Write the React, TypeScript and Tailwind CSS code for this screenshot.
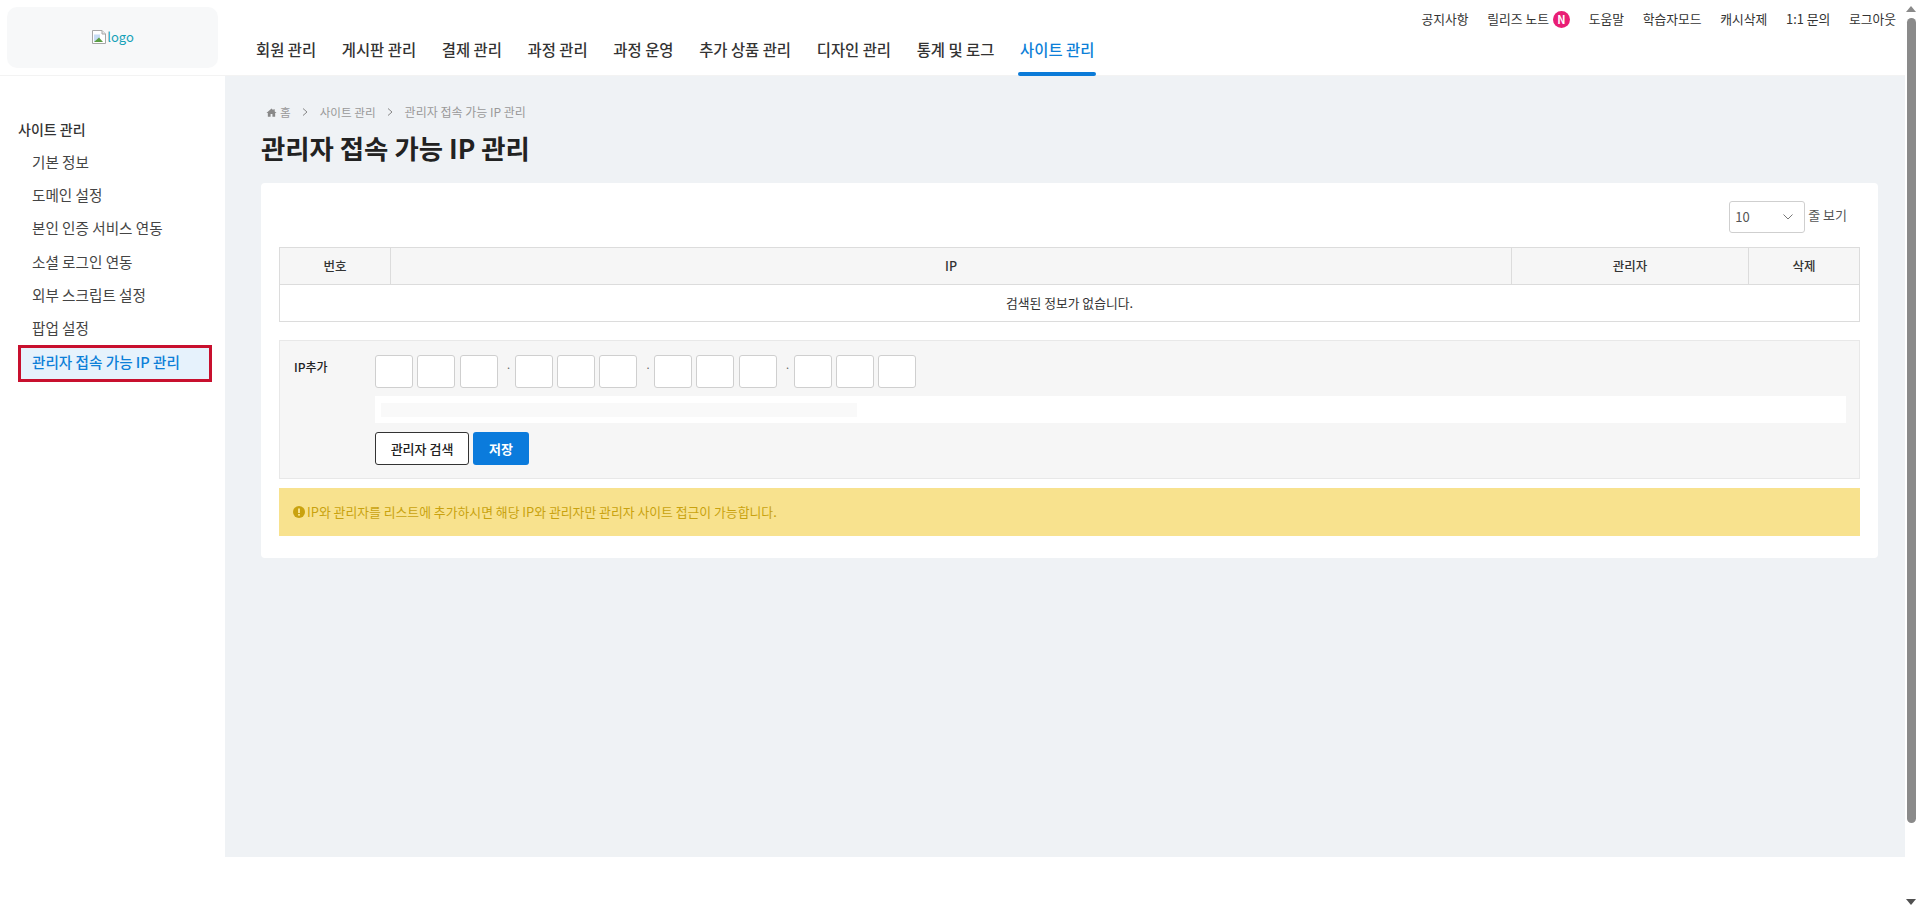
import React from "react";

const nav = ["회원 관리","게시판 관리","결제 관리","과정 관리","과정 운영","추가 상품 관리","디자인 관리","통계 및 로그"];
const side = ["기본 정보","도메인 설정","본인 인증 서비스 연동","소셜 로그인 연동","외부 스크립트 설정","팝업 설정"];
const top = ["도움말","학습자모드","캐시삭제","1:1 문의","로그아웃"];

function Box() {
  return <div className="w-[38px] h-[33px] bg-white border border-[#cfcfcf] rounded-[3px]" />;
}
function Triple() {
  return <div className="flex gap-[4.25px]"><Box /><Box /><Box /></div>;
}
function Dot() {
  return <div className="w-[17px] pl-[5px] text-center text-[11px] leading-[24px] text-[#666]">·</div>;
}

export default function App() {
  return (
    <div className="flex w-full h-[911px] overflow-hidden bg-white text-[#222] font-['Noto_Sans_CJK_KR','Noto_Sans',sans-serif]">
      <div className="flex-1 min-w-0 flex flex-col">
        <header className="h-[76px] shrink-0 flex border-b border-[#f3f3f3] bg-white">
          <div className="w-[211px] h-[61px] ml-[7px] mt-[7px] rounded-[10px] bg-[#f7f8f9] flex items-center justify-center shrink-0">
            <div className="flex items-center text-[13px] text-[#17a2b8] -mt-[1px]">
              <svg width="16" height="16" viewBox="0 0 16 16">
                <path d="M1.5 1.5H11L14.5 5V14.5H1.5Z" fill="#fff" stroke="#a6a6a6" />
                <path d="M11 1.5V5H14.5" fill="#e8e8e8" stroke="#a6a6a6" />
                <path d="M3 5.5H9V10L3 13Z" fill="#c7dcf5" />
                <path d="M3 13L8 8.5L12 13Z" fill="#5a9d43" />
              </svg>
              logo
            </div>
          </div>
          <div className="flex-1 min-w-0 flex flex-col">
            <div className="h-[36px] pt-[9px] pr-[9px] flex justify-end items-start gap-[18.7px] text-[12.8px] leading-[20px] text-[#333]">
              <span>공지사항</span>
              <span className="flex items-center gap-[4px] h-[20px]">
                릴리즈 노트
                <span className="w-[17px] h-[17px] rounded-full bg-[#e91e75] text-white text-[11px] font-bold flex items-center justify-center">N</span>
              </span>
              {top.map((t) => <span key={t}>{t}</span>)}
            </div>
            <nav className="flex-1 flex gap-[25.7px] pl-[38px] text-[15.4px] font-medium text-[#333]">
              {nav.map((n) => <span key={n} className="leading-[24px] pt-[1px]">{n}</span>)}
              <span className="relative leading-[24px] pt-[1px] text-[#0d7fd8]">
                사이트 관리
                <span className="absolute -left-[2px] -right-[2px] -bottom-[1px] h-[4px] rounded-[2px] bg-[#0b7bd8]" />
              </span>
            </nav>
          </div>
        </header>
        <div className="flex">
          <aside className="w-[225px] shrink-0 pt-[42px] pl-[18px] pr-[12px] bg-white">
            <div className="text-[14px] font-medium leading-[22px] text-[#333] mb-[5px]">사이트 관리</div>
            {side.map((s) => (
              <div key={s} className="h-[33.3px] pl-[14px] flex items-center text-[14.6px] text-[#444]">{s}</div>
            ))}
            <div className="h-[37px] w-[194px] pl-[11px] pb-[2px] flex items-center border-[3px] border-[#c8102e] bg-[#e6f2fc] text-[14.6px] font-medium text-[#0d7fd8]">
              관리자 접속 가능 IP 관리
            </div>
          </aside>
          <main className="flex-1 min-w-0 h-[781px] bg-[#eff2f5] pl-[36px] pr-[27px] pt-[26px]">
            <div className="flex items-center text-[11.6px] leading-[20px] text-[#999] pl-[5px]">
              <svg width="11" height="11" viewBox="0 0 24 24" fill="#888" className="mr-[3px]"><path d="M12 3L1 13h3v8h6v-6h4v6h6v-8h3L19 10V5h-3v2z" /></svg>
              <span>홈</span>
              <svg width="10" height="10" viewBox="0 0 10 10" fill="none" stroke="#888" className="mx-[9.5px]"><path d="M3 1.5L7 5L3 8.5" /></svg>
              <span>사이트 관리</span>
              <svg width="10" height="10" viewBox="0 0 10 10" fill="none" stroke="#888" className="mx-[9.5px]"><path d="M3 1.5L7 5L3 8.5" /></svg>
              <span className="text-[12px]">관리자 접속 가능 IP 관리</span>
            </div>
            <h1 className="mt-[6px] text-[26.4px] leading-[40px] font-bold text-[#222]">관리자 접속 가능 IP 관리</h1>
            <section className="mt-[15px] h-[375px] bg-white rounded-[4px] px-[18px] pt-[18px]">
              <div className="flex justify-end items-center h-[31px] pr-[13px]">
                <div className="w-[76px] h-[32px] border border-[#cfcfcf] rounded-[3px] flex items-center justify-between pl-[5px] pr-[10px] text-[13px] text-[#555]">
                  10
                  <svg width="12" height="8" viewBox="0 0 12 8" fill="none" stroke="#777"><path d="M1.5 1.5L6 6L10.5 1.5" /></svg>
                </div>
                <span className="ml-[3px] text-[13px] text-[#555] -mt-[3px]">줄 보기</span>
              </div>
              <table className="w-full mt-[15px] border-collapse text-[12.8px] text-[#333] table-fixed">
                <thead>
                  <tr className="h-[37px] bg-[#f6f6f6] text-[12.5px]">
                    <th className="w-[111px] border border-[#dcdcdc] font-medium">번호</th>
                    <th className="border border-[#dcdcdc] font-medium">IP</th>
                    <th className="w-[237px] border border-[#dcdcdc] font-medium">관리자</th>
                    <th className="w-[111px] border border-[#dcdcdc] font-medium">삭제</th>
                  </tr>
                </thead>
                <tbody>
                  <tr className="h-[37px]">
                    <td colSpan={4} className="border border-[#dcdcdc] text-center">검색된 정보가 없습니다.</td>
                  </tr>
                </tbody>
              </table>
              <div className="mt-[18px] h-[139px] bg-[#f6f6f6] border border-[#e8e8e8] flex pl-[14px] pr-[13px] pt-[14px]">
                <div className="w-[81px] shrink-0 text-[12px] font-medium leading-[24px] text-[#222]">IP추가</div>
                <div className="flex-1 min-w-0">
                  <div className="flex">
                    <Triple /><Dot /><Triple /><Dot /><Triple /><Dot /><Triple />
                  </div>
                  <div className="mt-[8px] h-[27px] bg-white pl-[6px] pt-[7px]">
                    <div className="w-[476px] h-[14px] bg-[#f9f9f9]" />
                  </div>
                  <div className="mt-[9px] flex gap-[4px]">
                    <button className="w-[94px] h-[33px] bg-white border border-[#333] rounded-[3px] text-[13px] font-medium text-[#222]">관리자 검색</button>
                    <button className="w-[56px] h-[33px] bg-[#0b7bdc] rounded-[3px] text-[13px] font-bold text-white">저장</button>
                  </div>
                </div>
              </div>
              <div className="mt-[9px] h-[48px] bg-[#f8e28e] flex items-center pl-[14px] text-[12.85px] text-[#c9a20f]">
                <svg width="12" height="12" viewBox="0 0 12 12" className="mr-[2px]"><circle cx="6" cy="6" r="6" fill="#c9a20f" /><rect x="5" y="2.5" width="2" height="4.5" fill="#f8e28e" /><rect x="5" y="8" width="2" height="1.6" fill="#f8e28e" /></svg>
                IP와 관리자를 리스트에 추가하시면 해당 IP와 관리자만 관리자 사이트 접근이 가능합니다.
              </div>
            </section>
          </main>
        </div>
      </div>
      <div className="w-[15px] shrink-0 flex flex-col items-center pr-[3px]">
        <svg width="10" height="6" viewBox="0 0 10 6" className="mt-[6px] fill-[#8a8a8a]"><path d="M5 0L10 6H0Z" /></svg>
        <div className="w-[9px] h-[805px] mt-[6px] rounded-[5px] bg-[#8a8a8a]" />
        <div className="flex-1" />
        <svg width="10" height="6" viewBox="0 0 10 6" className="mb-[6px] fill-[#505050]"><path d="M5 6L10 0H0Z" /></svg>
      </div>
    </div>
  );
}
